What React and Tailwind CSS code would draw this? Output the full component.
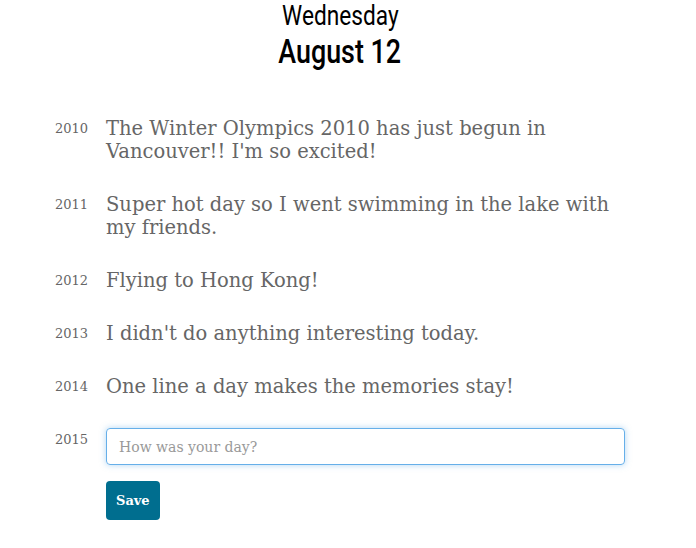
import React from 'react';

const entries = [
  { year: 2010, text: "The Winter Olympics 2010 has just begun in Vancouver!! I'm so excited!" },
  { year: 2011, text: 'Super hot day so I went swimming in the lake with my friends.' },
  { year: 2012, text: 'Flying to Hong Kong!' },
  { year: 2013, text: "I didn't do anything interesting today." },
  { year: 2014, text: 'One line a day makes the memories stay!' },
];

export default function App() {
  return (
    <div className="min-h-screen bg-white text-[#666]" style={{ fontFamily: '"DejaVu Serif", Georgia, serif' }}>
      {/* condensed headline: no narrow face installed, so squeeze Roboto */}
      <header className="pr-[16px] text-center text-black" style={{ fontFamily: 'Roboto, "Liberation Sans", sans-serif' }}>
        <div className="text-[27px] leading-[32px]">
          <span className="inline-block scale-x-[0.84]">Wednesday</span>
        </div>
        <div className="text-[34px] leading-[38px] font-medium">
          <span className="inline-block scale-x-[0.79]">August 12</span>
        </div>
      </header>

      <main className="mt-[47px] w-[570px] ml-[55px]">
        {entries.map((e) => (
          <div key={e.year} className="flex mb-[30px]">
            <div className="w-[51px] shrink-0 pt-[4px] text-[13px] leading-[16px]">{e.year}</div>
            <p className="text-[19.5px] leading-[23px]">{e.text}</p>
          </div>
        ))}
        <div className="flex">
          <div className="w-[51px] shrink-0 pt-[4px] text-[13px] leading-[16px]">2015</div>
          <div className="flex-1">
            <input
              type="text"
              placeholder="How was your day?"
              className="w-full h-[37px] rounded-[4px] border border-[#66afe9] px-[12px] text-[14px] placeholder:text-[#999] outline-none shadow-[0_0_6px_rgba(102,175,233,0.5)]"
            />
            <button className="mt-[16px] h-[39px] px-[10px] rounded-[4px] bg-[#006e8f] text-white text-[13px] font-bold">
              Save
            </button>
          </div>
        </div>
      </main>
    </div>
  );
}
